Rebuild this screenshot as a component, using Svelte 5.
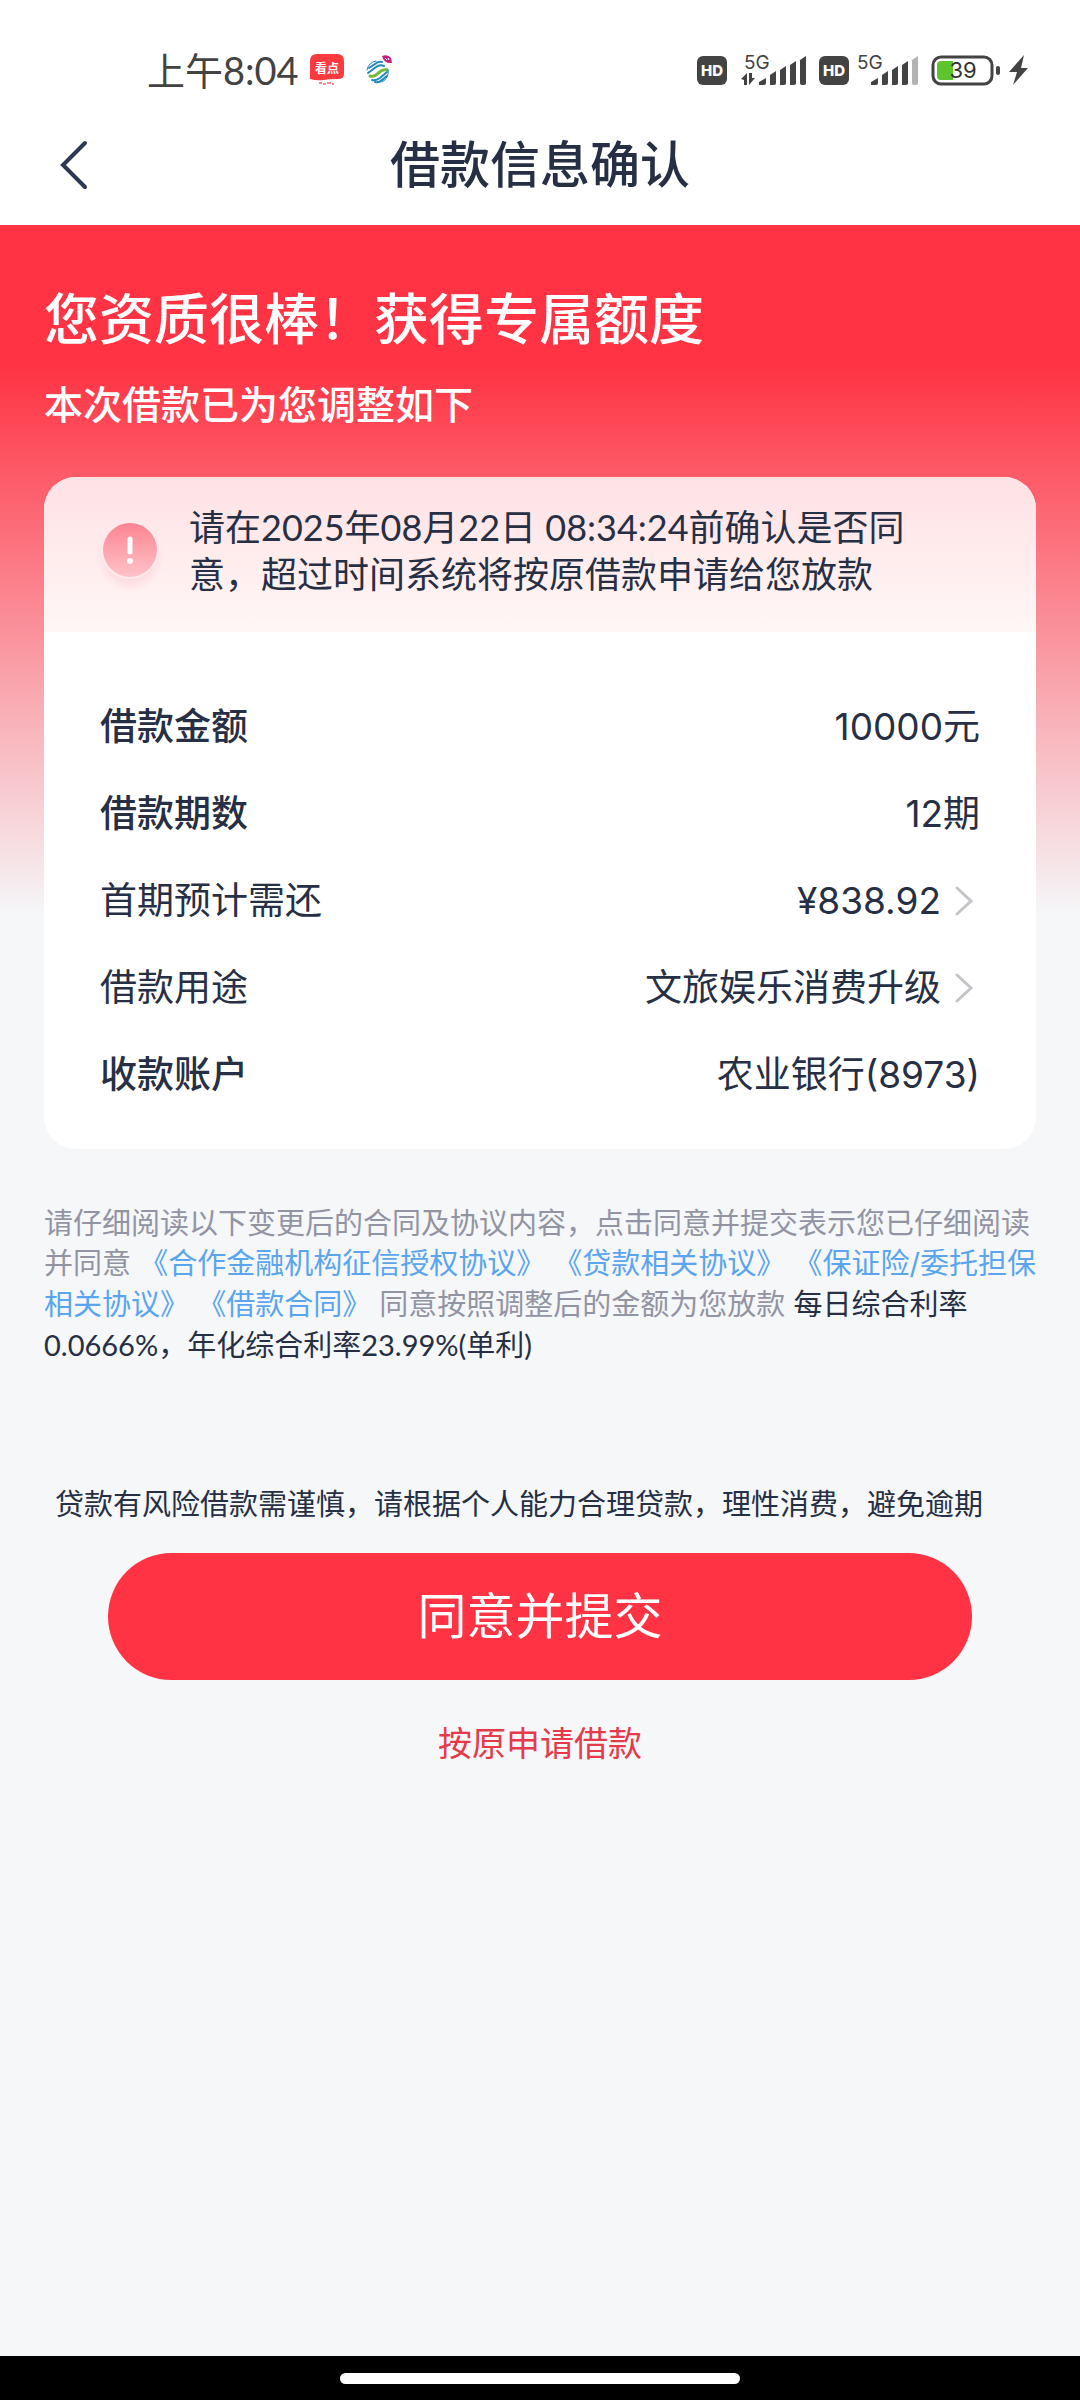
<script lang="ts">
    type Row = {
        label: string;
        value: string;
        strong?: boolean;
        link?: boolean;
    };

    const rows: Row[] = [
        { label: "借款金额", value: "10000元", strong: true },
        { label: "借款期数", value: "12期", strong: true },
        { label: "首期预计需还", value: "¥838.92", link: true },
        { label: "借款用途", value: "文旅娱乐消费升级", link: true },
        { label: "收款账户", value: "农业银行(8973)", strong: true },
    ];

    const agreements = [
        "《合作金融机构征信授权协议》",
        "《贷款相关协议》",
        "《保证险/委托担保相关协议》",
        "《借款合同》",
    ];
</script>

{#snippet hd()}
    <svg class="icon" width="30" height="29" viewBox="0 0 30 29">
        <rect width="30" height="29" rx="6" fill="#434343" />
        <text
            x="15"
            y="20"
            text-anchor="middle"
            font-size="15"
            font-weight="800"
            fill="#fff">HD</text
        >
    </svg>
{/snippet}

{#snippet signal(last: string, data: boolean)}
    <svg class="icon" width="66" height="46" viewBox="0 -6 66 46">
        <text x={data ? 3 : 0} y="16" font-size="19" fill="#434343">5G</text>
        {#if data}
            <path d="M0 26l6-6v12H3v-5zM8 20h3v5h3l-6 7z" fill="#434343" />
        {/if}
        <g fill="#434343" transform={data ? "translate(4 0)" : ""}>
            <path d="M14 32v-3l7-4v5q0 2-2 2z" />
            <path d="M25 32V22l6-4v12q0 2-2 2h-4z" />
            <path d="M35 32V17l6-4v17q0 2-2 2h-4z" />
            <path d="M45 32V12l6-4v22q0 2-2 2h-4z" />
            <path d="M55 30V7l6-4v27q0 2-2 2h-2q-2 0-2-2z" fill={last} />
        </g>
    </svg>
{/snippet}

<div class="page">
    <header>
        <div class="status">
            <span class="time">上午8:04</span>
            <svg class="icon app" width="34" height="33" viewBox="0 0 34 33">
                <path
                    d="M7 0h20q7 0 7 7v13q0 5-6 5-9 0-14 1-7 1-14-1V7q0-7 7-7z"
                    fill="#fb3b3f"
                />
                <text
                    x="17"
                    y="19"
                    text-anchor="middle"
                    font-size="12"
                    font-weight="700"
                    fill="#fff">看点</text
                >
                <path
                    d="M9 29h3m1 1h3m1-1h4m1 1h2"
                    stroke="#f88"
                    stroke-width="2"
                />
            </svg>
            <svg class="icon carrier" width="30" height="30" viewBox="0 0 30 30">
                <g fill="none" stroke-width="2" stroke-linecap="round">
                    <path
                        d="M5 13l6-4q3-3 7-2M4 18l8-6q4-3 8-1M11 27q4 1 7-2l5-4M8 25q4 1 8-2l7-6"
                        stroke="#2286c3"
                    />
                    <path
                        d="M6 21q3 1 6-1l5-4q3-2 6-1"
                        stroke="#74b83f"
                        stroke-width="3"
                    />
                    <path
                        d="M12 6a11 11 0 0 0-9 9M24 14a11 11 0 0 1-6 13"
                        stroke="#2286c3"
                        stroke-width="1"
                    />
                </g>
                <path d="M18 1q6-2 9 2l1 5q-8 1-10-7z" fill="#c3207f" />
                <path d="M21 3l2 2m1-2l1 2" stroke="#fff" />
            </svg>
            <div class="indicators">
                {@render hd()}
                {@render signal("#434343", true)}
                {@render hd()}
                {@render signal("#b3b3b3", false)}
                <svg class="icon" width="70" height="31" viewBox="0 0 70 31">
                    <rect
                        x="2"
                        y="2"
                        width="59"
                        height="27"
                        rx="8"
                        fill="#fff"
                        stroke="#434343"
                        stroke-width="3"
                    />
                    <path d="M10 6h12v19H10q-4 0-4-4V10q0-4 4-4z" fill="#5ec42b" />
                    <rect x="65" y="11" width="4" height="9" rx="2" fill="#434343" />
                    <text
                        x="32"
                        y="23"
                        text-anchor="middle"
                        font-size="22"
                        fill="#333">39</text
                    >
                </svg>
                <svg class="icon" width="20" height="30" viewBox="0 0 20 30">
                    <path d="M15 0L0 17h8L4 30l15-17h-7z" fill="#434343" />
                </svg>
            </div>
        </div>
        <nav>
            <button class="back" aria-label="返回">
                <svg width="28" height="50" viewBox="0 0 28 50">
                    <path
                        d="M25 3L3 25l22 22"
                        fill="none"
                        stroke="#2b3a52"
                        stroke-width="4"
                        stroke-linecap="round"
                    />
                </svg>
            </button>
            <h1>借款信息确认</h1>
        </nav>
    </header>

    <main>
        <h2>您资质很棒！获得专属额度</h2>
        <p class="sub">本次借款已为您调整如下</p>

        <section class="card">
            <div class="notice">
                <svg width="76" height="84" viewBox="0 0 76 84">
                    <defs>
                        <linearGradient id="dot" x1="0" y1="0" x2="0" y2="1">
                            <stop offset="0" stop-color="#fc8490" />
                            <stop offset="1" stop-color="#ffc3c9" />
                        </linearGradient>
                        <radialGradient id="glow">
                            <stop offset="0.5" stop-color="#ffd3d8" />
                            <stop offset="1" stop-color="#ffd3d8" stop-opacity="0" />
                        </radialGradient>
                    </defs>
                    <circle cx="38" cy="48" r="34" fill="url(#glow)" />
                    <circle cx="38" cy="40" r="29" fill="#ffeaec" />
                    <circle cx="38" cy="40" r="27" fill="url(#dot)" />
                    <path
                        d="M38 29v13"
                        stroke="#fff"
                        stroke-width="5"
                        stroke-linecap="round"
                    />
                    <circle cx="38" cy="51" r="3" fill="#fff" />
                </svg>
                <p>
                    请在2025年08月22日 08:34:24前确认是否同意，超过时间系统将按原借款申请给您放款
                </p>
            </div>

            <dl>
                {#each rows as row}
                    <div class="row">
                        <dt class:strong={row.strong}>{row.label}</dt>
                        <dd>
                            {#if row.link}
                                <button class="pick">
                                    {row.value}
                                    <svg width="32" height="32" viewBox="0 0 32 32">
                                        <path
                                            d="M9 3l14 13L9 29"
                                            fill="none"
                                            stroke="#c4c5c9"
                                            stroke-width="3"
                                            stroke-linecap="round"
                                        />
                                    </svg>
                                </button>
                            {:else}
                                {row.value}
                            {/if}
                        </dd>
                    </div>
                {/each}
            </dl>
        </section>

        <p class="terms">
            请仔细阅读以下变更后的合同及协议内容，点击同意并提交表示您已仔细阅读并同意
            {#each agreements as name}
                <a href="#agreement">{name}</a>{" "}
            {/each}
            同意按照调整后的金额为您放款
            <span class="rate">每日综合利率0.0666%，年化综合利率23.99%(单利)</span>
        </p>

        <p class="risk">
            贷款有风险借款需谨慎，请根据个人能力合理贷款，理性消费，避免逾期
        </p>
        <button class="submit">同意并提交</button>
        <button class="original">按原申请借款</button>
    </main>

    <footer><span></span></footer>
</div>

<style>
    :global(body) {
        margin: 0;
        background: #f5f7f9;
    }
    .page {
        display: flex;
        flex-direction: column;
        min-height: 100vh;
        color: #272f45;
        font-family: Inter, "Noto Sans CJK SC", sans-serif;
    }
    h1,
    h2,
    p,
    dl,
    dd {
        margin: 0;
    }
    button {
        padding: 0;
        border: none;
        background: none;
        color: inherit;
        font: inherit;
        cursor: pointer;
    }
    svg {
        display: block;
        flex: none;
    }
    .time,
    .notice p,
    .rate {
        font-family: Lato, "Noto Sans CJK SC", sans-serif;
    }

    header {
        background: #fff;
    }
    .status {
        display: flex;
        align-items: center;
        height: 104px;
        padding: 36px 51px 0 147px;
        box-sizing: border-box;
        color: #434343;
    }
    .time {
        font-size: 38px;
        line-height: 46px;
    }
    .app {
        margin-left: 11px;
    }
    .carrier {
        margin-left: 20px;
    }
    .indicators {
        display: flex;
        align-items: center;
        gap: 8px;
        margin-left: auto;
    }
    .indicators .icon:nth-child(2) {
        margin: 0 4px 0 6px;
    }
    nav {
        display: grid;
        grid-template-columns: 100px 1fr 100px;
        align-items: center;
        height: 121px;
    }
    .back {
        justify-self: end;
        margin-right: 12px;
    }
    h1 {
        font-size: 50px;
        font-weight: 500;
        line-height: 72px;
        text-align: center;
    }

    main {
        flex: 1;
        display: flex;
        flex-direction: column;
        padding: 56px 44px 80px;
        background: linear-gradient(#ff3343 140px, #f5f7f9 690px);
    }
    h2 {
        color: #fff;
        font-size: 55px;
        font-weight: 500;
        line-height: 76px;
    }
    .sub {
        margin-top: 20px;
        color: #fff;
        font-size: 39px;
        font-weight: 500;
        line-height: 56px;
    }
    .card {
        margin-top: 44px;
        border-radius: 32px;
        background: #fff;
        overflow: hidden;
    }
    .notice {
        display: flex;
        align-items: flex-start;
        gap: 21px;
        padding: 27px 96px 34px 48px;
        background: linear-gradient(#ffe1e4, #fff7f6);
    }
    .notice svg {
        margin-top: 6px;
    }
    .notice p {
        font-size: 36px;
        line-height: 47px;
    }
    dl {
        padding: 51px 56px 31px;
    }
    .row {
        display: flex;
        align-items: center;
        justify-content: space-between;
        height: 87px;
        font-size: 37px;
        line-height: 56px;
    }
    .strong {
        font-weight: 500;
    }
    .pick {
        display: flex;
        align-items: center;
        gap: 7px;
    }

    .terms {
        margin-top: 55px;
        color: #9394a3;
        font-size: 29px;
        line-height: 40px;
    }
    .terms a {
        color: #5aa5ee;
        text-decoration: none;
    }
    .rate {
        color: #272f45;
    }
    .risk {
        margin-top: 119px;
        padding-left: 11px;
        font-size: 29px;
        line-height: 40px;
    }
    .submit {
        height: 127px;
        margin: 28px 64px 0;
        border-radius: 64px;
        background: #ff3343;
        color: #fff;
        font-size: 49px;
        line-height: 72px;
    }
    .original {
        align-self: center;
        margin-top: 40px;
        color: #e53a4a;
        font-size: 34px;
        line-height: 48px;
    }

    footer {
        display: flex;
        align-items: center;
        justify-content: center;
        height: 44px;
        background: #000;
    }
    footer span {
        width: 37%;
        height: 11px;
        border-radius: 6px;
        background: #fff;
    }
</style>
